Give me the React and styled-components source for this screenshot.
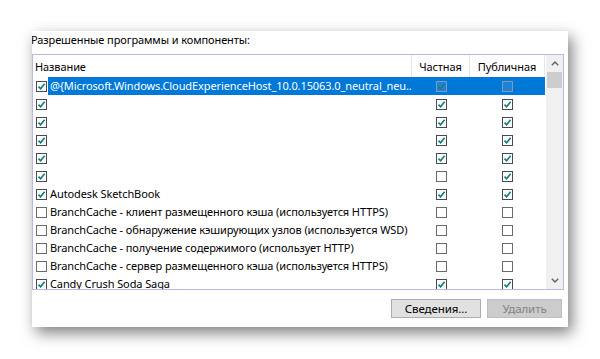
import React from "react";
import styled, { createGlobalStyle } from "styled-components";

const Global = createGlobalStyle`
  html, body { margin: 0; padding: 0; background: #ffffff; }
  body { font-family: "Noto Sans", "Segoe UI", sans-serif; font-size: 11px; letter-spacing: -0.1px; color: #000; }
`;

const Page = styled.div`
  padding: 31px 0 0 32px;
  height: 359px;
  box-sizing: border-box;
  overflow: hidden;
`;

const Panel = styled.div`
  width: 536px;
  height: 296px;
  background: #ffffff;
  box-shadow: 4px 6px 14px rgba(0, 0, 0, 0.5);
  display: flex;
  flex-direction: column;
  overflow: hidden;
`;

const Caption = styled.div`
  height: 23px;
  line-height: 17px;
  margin-left: -1px;
  white-space: nowrap;
`;

const ListBox = styled.div`
  width: 530px;
  height: 234px;
  border: 1px solid #b8b8e4;
  display: flex;
`;

const ListMain = styled.div`
  flex: 1;
  display: flex;
  flex-direction: column;
  overflow: hidden;
`;

const cols = "379px 58px 75px";

const HeaderRow = styled.div`
  display: grid;
  grid-template-columns: ${cols};
  height: 22px;
  flex: none;
`;

const HeaderCell = styled.div`
  display: flex;
  align-items: center;
  justify-content: ${(p) => (p.$center ? "center" : "flex-start")};
  padding-left: ${(p) => (p.$center ? "0" : "2px")};
  border-right: 1px solid #e5e5e5;
  white-space: nowrap;
  padding-top: 1px;
`;

const Body = styled.div`
  flex: 1;
  overflow: hidden;
`;

const Row = styled.div`
  display: grid;
  grid-template-columns: ${cols};
  height: 18px;
`;

const NameCell = styled.div`
  display: flex;
  align-items: center;
  padding-left: 3px;
  min-width: 0;
`;

const Label = styled.div`
  flex: 1;
  min-width: 0;
  height: 18px;
  line-height: 18px;
  margin-left: 1px;
  padding-left: 2px;
  white-space: nowrap;
  background: ${(p) => (p.$selected ? "#0078d7" : "transparent")};
  color: ${(p) => (p.$selected ? "#ffffff" : "#000000")};
`;

const BoxCell = styled.div`
  display: flex;
  align-items: center;
  justify-content: center;
  background: ${(p) => (p.$selected ? "#0078d7" : "transparent")};
`;

const Box = styled.div`
  width: 11px;
  height: 11px;
  box-sizing: border-box;
  flex: none;
  border: 1px solid ${(p) => (p.$selected ? "#7d9cbc" : p.$on ? "#4a4a4a" : "#6b6b6b")};
  background: ${(p) => (p.$selected ? "#1f82d4" : "#ffffff")};
  display: flex;
  align-items: center;
  justify-content: center;
`;

const ScrollBar = styled.div`
  width: 17px;
  flex: none;
  background: #f0f0f0;
  display: flex;
  flex-direction: column;
`;

const Arrow = styled.div`
  height: 17px;
  display: flex;
  align-items: center;
  justify-content: center;
  flex: none;
`;

const Thumb = styled.div`
  height: 16px;
  margin: 0 1px;
  background: #cdcdcd;
  flex: none;
`;

const Track = styled.div`
  flex: 1;
`;

const ButtonBar = styled.div`
  display: flex;
  justify-content: flex-end;
  gap: 6px;
  margin-top: 9px;
  padding-right: 6px;
`;

const Button = styled.div`
  width: ${(p) => p.$w}px;
  height: 19px;
  box-sizing: border-box;
  border: 1px solid ${(p) => (p.$disabled ? "#bfbfbf" : "#adadad")};
  background: ${(p) => (p.$disabled ? "#cccccc" : "#e1e1e1")};
  color: ${(p) => (p.$disabled ? "#838383" : "#000000")};
  display: flex;
  align-items: center;
  justify-content: center;
  font-size: 11.5px;
`;

const Check = ({ on, selected }) => (
  <Box $on={on} $selected={selected}>
    {on && (
      <svg width="9" height="9" viewBox="0 0 9 9">
        <path d="M1.5 4.6 L3.6 6.7 L7.6 1.8" fill="none" stroke={selected ? "#1a7c86" : "#0f7b7b"} strokeWidth="1.6" />
      </svg>
    )}
  </Box>
);

const rows = [
  { on: true, name: "@{Microsoft.Windows.CloudExperienceHost_10.0.15063.0_neutral_neu...", p: true, u: false, sel: true },
  { on: true, name: "", p: true, u: true },
  { on: true, name: "", p: true, u: true },
  { on: true, name: "", p: true, u: true },
  { on: true, name: "", p: true, u: true },
  { on: true, name: "", p: false, u: true },
  { on: true, name: "Autodesk SketchBook", p: true, u: true },
  { on: false, name: "BranchCache - клиент размещенного кэша (используется HTTPS)", p: false, u: false },
  { on: false, name: "BranchCache - обнаружение кэширующих узлов (используется WSD)", p: false, u: false },
  { on: false, name: "BranchCache - получение содержимого (использует HTTP)", p: false, u: false },
  { on: false, name: "BranchCache - сервер размещенного кэша (используется HTTPS)", p: false, u: false },
  { on: true, name: "Candy Crush Soda Saga", p: true, u: true },
];

export default function App() {
  return (
    <>
      <Global />
      <Page>
        <Panel>
          <Caption>Разрешенные программы и компоненты:</Caption>
          <ListBox>
            <ListMain>
              <HeaderRow>
                <HeaderCell>Название</HeaderCell>
                <HeaderCell $center>Частная</HeaderCell>
                <HeaderCell $center>Публичная</HeaderCell>
              </HeaderRow>
              <Body>
                {rows.map((r, i) => (
                  <Row key={i}>
                    <NameCell>
                      <Check on={r.on} />
                      <Label $selected={r.sel}>{r.name}</Label>
                    </NameCell>
                    <BoxCell $selected={r.sel}>
                      <Check on={r.p} selected={r.sel} />
                    </BoxCell>
                    <BoxCell $selected={r.sel}>
                      <Check on={r.u} selected={r.sel} />
                    </BoxCell>
                  </Row>
                ))}
              </Body>
            </ListMain>
            <ScrollBar>
              <Arrow>
                <svg width="8" height="5" viewBox="0 0 8 5">
                  <path d="M0.8 4.2 L4 1 L7.2 4.2" fill="none" stroke="#606060" strokeWidth="1.4" />
                </svg>
              </Arrow>
              <Thumb />
              <Track />
              <Arrow>
                <svg width="8" height="5" viewBox="0 0 8 5">
                  <path d="M0.8 0.8 L4 4 L7.2 0.8" fill="none" stroke="#606060" strokeWidth="1.4" />
                </svg>
              </Arrow>
            </ScrollBar>
          </ListBox>
          <ButtonBar>
            <Button $w={90}>Сведения...</Button>
            <Button $w={75} $disabled>Удалить</Button>
          </ButtonBar>
        </Panel>
      </Page>
    </>
  );
}
